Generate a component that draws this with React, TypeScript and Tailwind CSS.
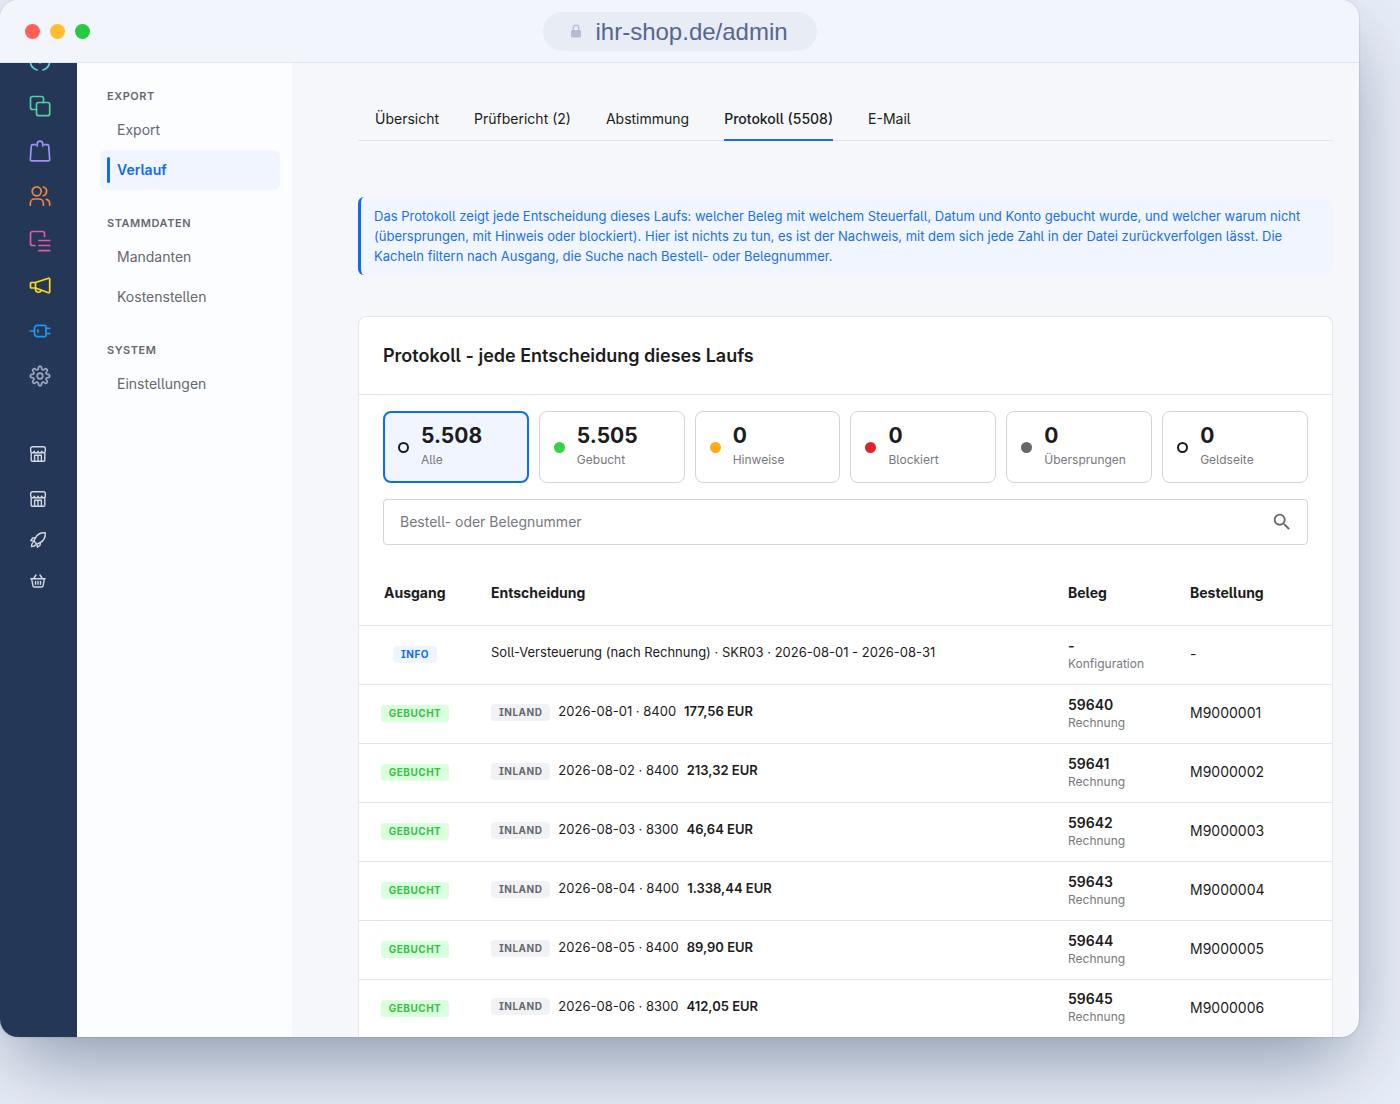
import { useState } from 'react';
import type { ReactNode } from 'react';
import { MdSearch } from 'react-icons/md';

const tabs = ['Übersicht', 'Prüfbericht (2)', 'Abstimmung', 'Protokoll (5508)', 'E-Mail'];

const navGroups = [
  { title: 'Export', items: ['Export', 'Verlauf'] },
  { title: 'Stammdaten', items: ['Mandanten', 'Kostenstellen'] },
  { title: 'System', items: ['Einstellungen'] },
];

const tiles = [
  { label: 'Alle', count: '5.508', dot: 'border-2 border-[#1b1c20]' },
  { label: 'Gebucht', count: '5.505', dot: 'bg-[#37d046]' },
  { label: 'Hinweise', count: '0', dot: 'bg-[#ffab17]' },
  { label: 'Blockiert', count: '0', dot: 'bg-[#de2528]' },
  { label: 'Übersprungen', count: '0', dot: 'bg-[#66676b]' },
  { label: 'Geldseite', count: '0', dot: 'border-2 border-[#1b1c20]' },
];

const bookings = [
  { date: '2026-08-01', account: '8400', amount: '177,56', receipt: '59640', order: 'M9000001' },
  { date: '2026-08-02', account: '8400', amount: '213,32', receipt: '59641', order: 'M9000002' },
  { date: '2026-08-03', account: '8300', amount: '46,64', receipt: '59642', order: 'M9000003' },
  { date: '2026-08-04', account: '8400', amount: '1.338,44', receipt: '59643', order: 'M9000004' },
  { date: '2026-08-05', account: '8400', amount: '89,90', receipt: '59644', order: 'M9000005' },
  { date: '2026-08-06', account: '8300', amount: '412,05', receipt: '59645', order: 'M9000006' },
];

// outline of the settings cog: a circle with eight soft teeth
const cogPath =
  Array.from({ length: 96 }, (_, i) => {
    const angle = (i / 96) * Math.PI * 2;
    const radius = 8.2 + 1.5 * Math.tanh(2 * Math.cos(8 * angle));
    const x = (12 + radius * Math.cos(angle)).toFixed(2);
    const y = (12 + radius * Math.sin(angle)).toFixed(2);
    return `${i === 0 ? 'M' : 'L'}${x} ${y}`;
  }).join('') + 'Z';

function RailIcon({ label, color, children }: { label: string; color: string; children: ReactNode }) {
  return (
    <a href="#" aria-label={label} className={`block ${color}`}>
      <svg
        viewBox="0 0 24 24"
        className="size-6"
        fill="none"
        stroke="currentColor"
        strokeWidth="1.7"
        strokeLinecap="round"
        strokeLinejoin="round"
      >
        {children}
      </svg>
    </a>
  );
}

function SmallIcon({ label, children }: { label: string; children: ReactNode }) {
  return (
    <a href="#" aria-label={label} className="block text-[#d3dae6]">
      <svg
        viewBox="0 0 16 16"
        className="size-4"
        fill="none"
        stroke="currentColor"
        strokeWidth="1.4"
        strokeLinecap="round"
        strokeLinejoin="round"
      >
        {children}
      </svg>
    </a>
  );
}

function StoreGlyph() {
  return (
    <>
      <path d="M2.5.7h11a1.8 1.8 0 0 1 1.8 1.8v2.2a1.8 1.8 0 0 1-3.6.4 1.85 1.85 0 0 1-3.7 0 1.85 1.85 0 0 1-3.7 0A1.8 1.8 0 0 1 .7 4.7V2.5A1.8 1.8 0 0 1 2.5.7Z" />
      <path d="M1.2 7v7.3a1 1 0 0 0 1 1h11.6a1 1 0 0 0 1-1V7" />
      <path d="M4.6 15.3V9.3h6.8v6M8 9.3v6" />
    </>
  );
}

function Rail() {
  return (
    <aside className="w-[77px] shrink-0 overflow-hidden bg-[#243757]">
      {/* scrolled list, the first entry is cut off by the title bar */}
      <nav className="-mt-[14px] flex flex-col gap-[21px] pl-7">
        <RailIcon label="Dashboard" color="text-[#5fd3e0]">
          <path d="M9 21A9.700 9.700 0 0 1 2.300 12a9.700 9.700 0 0 1 19.400 0A9.700 9.700 0 0 1 15 21M12 14v-3" />
        </RailIcon>
        <RailIcon label="Kataloge" color="text-[#56cf9c]">
          <path d="M8.5 15.5h-4a2 2 0 0 1-2-2v-9a2 2 0 0 1 2-2h9a2 2 0 0 1 2 2v4" />
          <rect x="8.5" y="8.5" width="13.2" height="13.2" rx="2" />
        </RailIcon>
        <RailIcon label="Bestellungen" color="text-[#a190f5]">
          <path d="M7.5 5.7H4.8a1.5 1.5 0 0 0-1.500 1.400L2.300 20.200A1.500 1.500 0 0 0 3.800 21.800h16.400a1.500 1.500 0 0 0 1.500-1.600L20.700 7.100a1.500 1.500 0 0 0-1.500-1.400h-2.700" />
          <path d="M9.200 7V5a2.800 2.800 0 0 1 5.600 0v2" />
        </RailIcon>
        <RailIcon label="Kunden" color="text-[#f0883e]">
          <circle cx="8.7" cy="7.3" r="4.5" />
          <path d="M15.3 3a4.500 4.500 0 0 1 0 8.700" />
          <path d="M2.300 21.200v-2a4.200 4.200 0 0 1 4.200-4.200h4.700a4.200 4.200 0 0 1 4.200 4.200v2M18.300 15.400a4.200 4.200 0 0 1 3.400 4.100v1.700" />
        </RailIcon>
        <RailIcon label="Inhalte" color="text-[#e05aa6]">
          <path d="M16.500 7.500v-3a2 2 0 0 0-2-2h-10a2 2 0 0 0-2 2v10a2 2 0 0 0 2 2h2.500" />
          <path d="M11 11.500h10.700M11 16.500h10.700M11 21.700h10.700" />
        </RailIcon>
        <RailIcon label="Marketing" color="text-[#ffdb19]">
          <path d="M7.500 8.500 20.500 4.200a.9.9 0 0 1 1.200.9v12.800a.9.9 0 0 1-1.200.9L7.500 14Z" />
          <path d="M7.500 8.500H3.300a.8.8 0 0 0-.8.8v3.900a.8.8 0 0 0 .8.8h4.200M7.500 14.200v1.300a3 3 0 0 0 5.800.8" />
        </RailIcon>
        <RailIcon label="Erweiterungen" color="text-[#2196f3]">
          <path d="M9.500 6.300h7a1.500 1.500 0 0 1 1.500 1.500v8.400a1.500 1.500 0 0 1-1.500 1.500h-7a3 3 0 0 1-3-3V9.300a3 3 0 0 1 3-3Z" />
          <path d="M2.300 12h4.200M18 9.300h3.700M18 14.700h3.700M10 11v2" />
        </RailIcon>
        <RailIcon label="Einstellungen" color="text-[#9aa8bd]">
          <path d={cogPath} />
          <circle cx="12" cy="12" r="2.8" />
        </RailIcon>
      </nav>
      <nav className="mt-[58px] flex flex-col gap-[25px] pl-[30px]">
        <div className="mb-1">
          <SmallIcon label="Verkaufskanal 1">
            <StoreGlyph />
          </SmallIcon>
        </div>
        <SmallIcon label="Verkaufskanal 2">
          <StoreGlyph />
        </SmallIcon>
        <SmallIcon label="Start">
          <path d="M15.200.8C11 .4 7.600 2 5.500 5.600L3.800 9.100l3.100 3.100 3.500-1.700C14 8.400 15.600 5 15.200.8Z" />
          <path d="M5.500 5.600 2.700 6 .8 8.600l3 .5M10.400 10.500 10 13.300l-2.600 1.900-.5-3M3 10.500c-1.100.7-1.500 2.600-1.500 4 1.400 0 3.300-.4 4-1.500" />
        </SmallIcon>
        <SmallIcon label="Warenkorb">
          <path d="M.8 5.800h14.400M1.700 6l1.200 6.800a1.500 1.500 0 0 0 1.500 1.200h7.200a1.500 1.500 0 0 0 1.500-1.200L14.300 6M6 2 3.700 5.500M10 2l2.300 3.500M5.500 8.500v2.800M8 8.500v2.800M10.500 8.500v2.800" />
        </SmallIcon>
      </nav>
    </aside>
  );
}

function SideNav() {
  return (
    <nav className="w-[215px] shrink-0 bg-[#fcfdff] pt-[23px] pr-3 pl-[23px] text-[#66686d]">
      {navGroups.map((group) => (
        <section key={group.title} className="mb-[23px]">
          <h2 className="pl-[7px] text-[11px] leading-5 font-semibold tracking-wider uppercase">{group.title}</h2>
          <ul className="pt-1">
            {group.items.map((item) => (
              <li key={item}>
                {item === 'Verlauf' ? (
                  <a
                    href="#"
                    aria-current="page"
                    className="flex h-10 items-center rounded-md bg-[#f0f5ff] pl-[7px] text-sm font-semibold text-[#0f6bf0]"
                  >
                    <span className="mr-[7px] h-[26px] w-[3px] rounded-sm bg-[#0f6bf0]" />
                    {item}
                  </a>
                ) : (
                  <a href="#" className="flex h-10 items-center pl-[17px] text-sm">
                    {item}
                  </a>
                )}
              </li>
            ))}
          </ul>
        </section>
      ))}
    </nav>
  );
}

function Badge({ className, children }: { className: string; children: ReactNode }) {
  return (
    <span
      className={`inline-block rounded px-2 align-middle text-[10px] leading-[17px] font-bold tracking-wider ${className}`}
    >
      {children}
    </span>
  );
}

function LogTable() {
  return (
    <table className="w-full table-fixed border-collapse text-left">
      <colgroup>
        <col className="w-[112px]" />
        <col />
        <col className="w-[122px]" />
        <col className="w-[162px]" />
      </colgroup>
      <thead>
        <tr className="h-16 text-sm font-semibold">
          <th className="pl-[25px]">Ausgang</th>
          <th className="pl-5">Entscheidung</th>
          <th className="pl-5">Beleg</th>
          <th className="pl-5">Bestellung</th>
        </tr>
      </thead>
      <tbody>
        <tr className="h-[59px] border-t border-[#e4e5e8]">
          <td className="pb-0.5 text-center text-[13px] leading-5">
            <Badge className="bg-[#eff5ff] text-[#0f6bf0]">INFO</Badge>
          </td>
          <td className="pb-1 pl-5 text-[13px]">
            Soll-Versteuerung (nach Rechnung) · SKR03 · 2026-08-01 - 2026-08-31
          </td>
          <td className="pl-5">
            <div className="text-sm leading-[18px] font-semibold">-</div>
            <div className="text-xs leading-[18px] text-[#76787d]">Konfiguration</div>
          </td>
          <td className="pb-px pl-5 text-sm">-</td>
        </tr>
        {bookings.map((row) => (
          <tr key={row.receipt} className="h-[59px] border-t border-[#e4e5e8] last:h-[58px]">
            <td className="pb-0.5 text-center text-[13px] leading-5">
              <Badge className="bg-[#daffdc] text-[#37c046]">GEBUCHT</Badge>
            </td>
            <td className="pb-1 pl-5 text-[13px]">
              <Badge className="mr-2 bg-[#f1f2f5] text-[#66686d]">INLAND</Badge>
              {row.date} · {row.account}
              <strong className="ml-2 font-semibold">{row.amount} EUR</strong>
            </td>
            <td className="pl-5">
              <div className="text-sm leading-[18px] font-semibold">{row.receipt}</div>
              <div className="text-xs leading-[18px] text-[#76787d]">Rechnung</div>
            </td>
            <td className="pb-px pl-5 text-sm">{row.order}</td>
          </tr>
        ))}
      </tbody>
    </table>
  );
}

export default function App() {
  const [tab, setTab] = useState('Protokoll (5508)');
  const [filter, setFilter] = useState('Alle');

  return (
    <div className="min-h-screen overflow-hidden bg-[#e8eef8] pr-[41px] pb-[67px] font-['Inter',sans-serif] text-[#1b1c20] [font-feature-settings:'ss04']">
      <div className="overflow-hidden rounded-[18px] bg-[#f5f7fb] shadow-[0_32px_80px_-12px_rgba(40,55,90,0.5),0_0_2px_rgba(40,55,90,0.3)]">
        <header className="flex h-[63px] items-center border-b border-[#e0e4ec] bg-[#f3f5fc] px-[25px]">
          <div className="flex flex-1 gap-[10px]">
            <span className="size-[15px] rounded-full bg-[#ff5f57]" />
            <span className="size-[15px] rounded-full bg-[#febc2e]" />
            <span className="size-[15px] rounded-full bg-[#28c840]" />
          </div>
          <div className="flex h-[39px] w-[274px] items-center rounded-full bg-[#e8ecf4] pl-[27px]">
            <svg viewBox="0 0 12 14" className="mr-[14px] h-[14px] w-3" aria-hidden="true">
              <path d="M3.2 7V4a2.8 2.8 0 0 1 5.6 0v3" fill="none" stroke="#b7bcd6" strokeWidth="1.3" />
              <rect x="1" y="6" width="10" height="7.6" rx="1.5" fill="#b7bcd6" />
            </svg>
            <span className="pt-px font-['Liberation_Sans',sans-serif] text-2xl text-[#566690]">ihr-shop.de/admin</span>
          </div>
          <div className="flex-1" />
        </header>

        <div className="flex">
          <Rail />
          <SideNav />
          <main className="min-w-0 flex-1 pt-9 pr-[26px] pl-[66px]">
            <div role="tablist" className="flex gap-[35px] border-b border-[#e1e4ea] px-[17px]">
              {tabs.map((name) => (
                <button
                  key={name}
                  type="button"
                  role="tab"
                  aria-selected={tab === name}
                  onClick={() => setTab(name)}
                  className={`-mb-px h-[42px] border-b-2 text-sm ${
                    tab === name ? 'border-[#1a6ed8] font-medium' : 'border-transparent'
                  }`}
                >
                  {name}
                </button>
              ))}
            </div>

            <p className="mt-14 rounded-md border-l-[3px] border-[#0f6bf0] bg-[#f0f5ff] py-[9px] pr-3 pl-[13px] text-[13px] leading-5 text-[#1a70e8]">
              Das Protokoll zeigt jede Entscheidung dieses Laufs: welcher Beleg mit welchem Steuerfall, Datum und
              Konto gebucht wurde, und welcher warum nicht (übersprungen, mit Hinweis oder blockiert). Hier ist nichts
              zu tun, es ist der Nachweis, mit dem sich jede Zahl in der Datei zurückverfolgen lässt. Die Kacheln
              filtern nach Ausgang, die Suche nach Bestell- oder Belegnummer.
            </p>

            <section className="mt-[41px] rounded-t-lg border border-b-0 border-[#e4e6ea] bg-white">
              <h1 className="flex h-[78px] items-center border-b border-[#e4e5e8] px-6 text-lg font-semibold">
                Protokoll - jede Entscheidung dieses Laufs
              </h1>

              <div className="grid grid-cols-6 gap-[10px] px-6 pt-4">
                {tiles.map((tile) => (
                  <button
                    key={tile.label}
                    type="button"
                    aria-pressed={filter === tile.label}
                    onClick={() => setFilter(tile.label)}
                    className={`flex h-[72px] items-center gap-3 rounded-lg text-left ${
                      filter === tile.label
                        ? 'border-2 border-[#0f6bf0] bg-[#f0f5ff] px-[13px]'
                        : 'border border-[#d2d4d8] px-[14px]'
                    }`}
                  >
                    <span className={`size-[11px] rounded-full ${tile.dot}`} />
                    <span className="pt-0.5">
                      <span className="block text-[21px] leading-6 font-bold">{tile.count}</span>
                      <span className="block text-xs leading-6 text-[#76787d]">{tile.label}</span>
                    </span>
                  </button>
                ))}
              </div>

              <div className="mx-6 mt-4 flex h-[46px] items-center rounded border border-[#d2d4d8] pr-[14px] pl-4">
                <input
                  type="search"
                  aria-label="Bestell- oder Belegnummer"
                  placeholder="Bestell- oder Belegnummer"
                  className="min-w-0 flex-1 text-sm outline-none placeholder:text-[#76787d]"
                />
                <button type="button" aria-label="Suchen" className="text-[#66686d]">
                  <MdSearch className="size-[22px]" />
                </button>
              </div>

              <div className="pt-4">
                <LogTable />
              </div>
            </section>
          </main>
        </div>
      </div>
    </div>
  );
}
